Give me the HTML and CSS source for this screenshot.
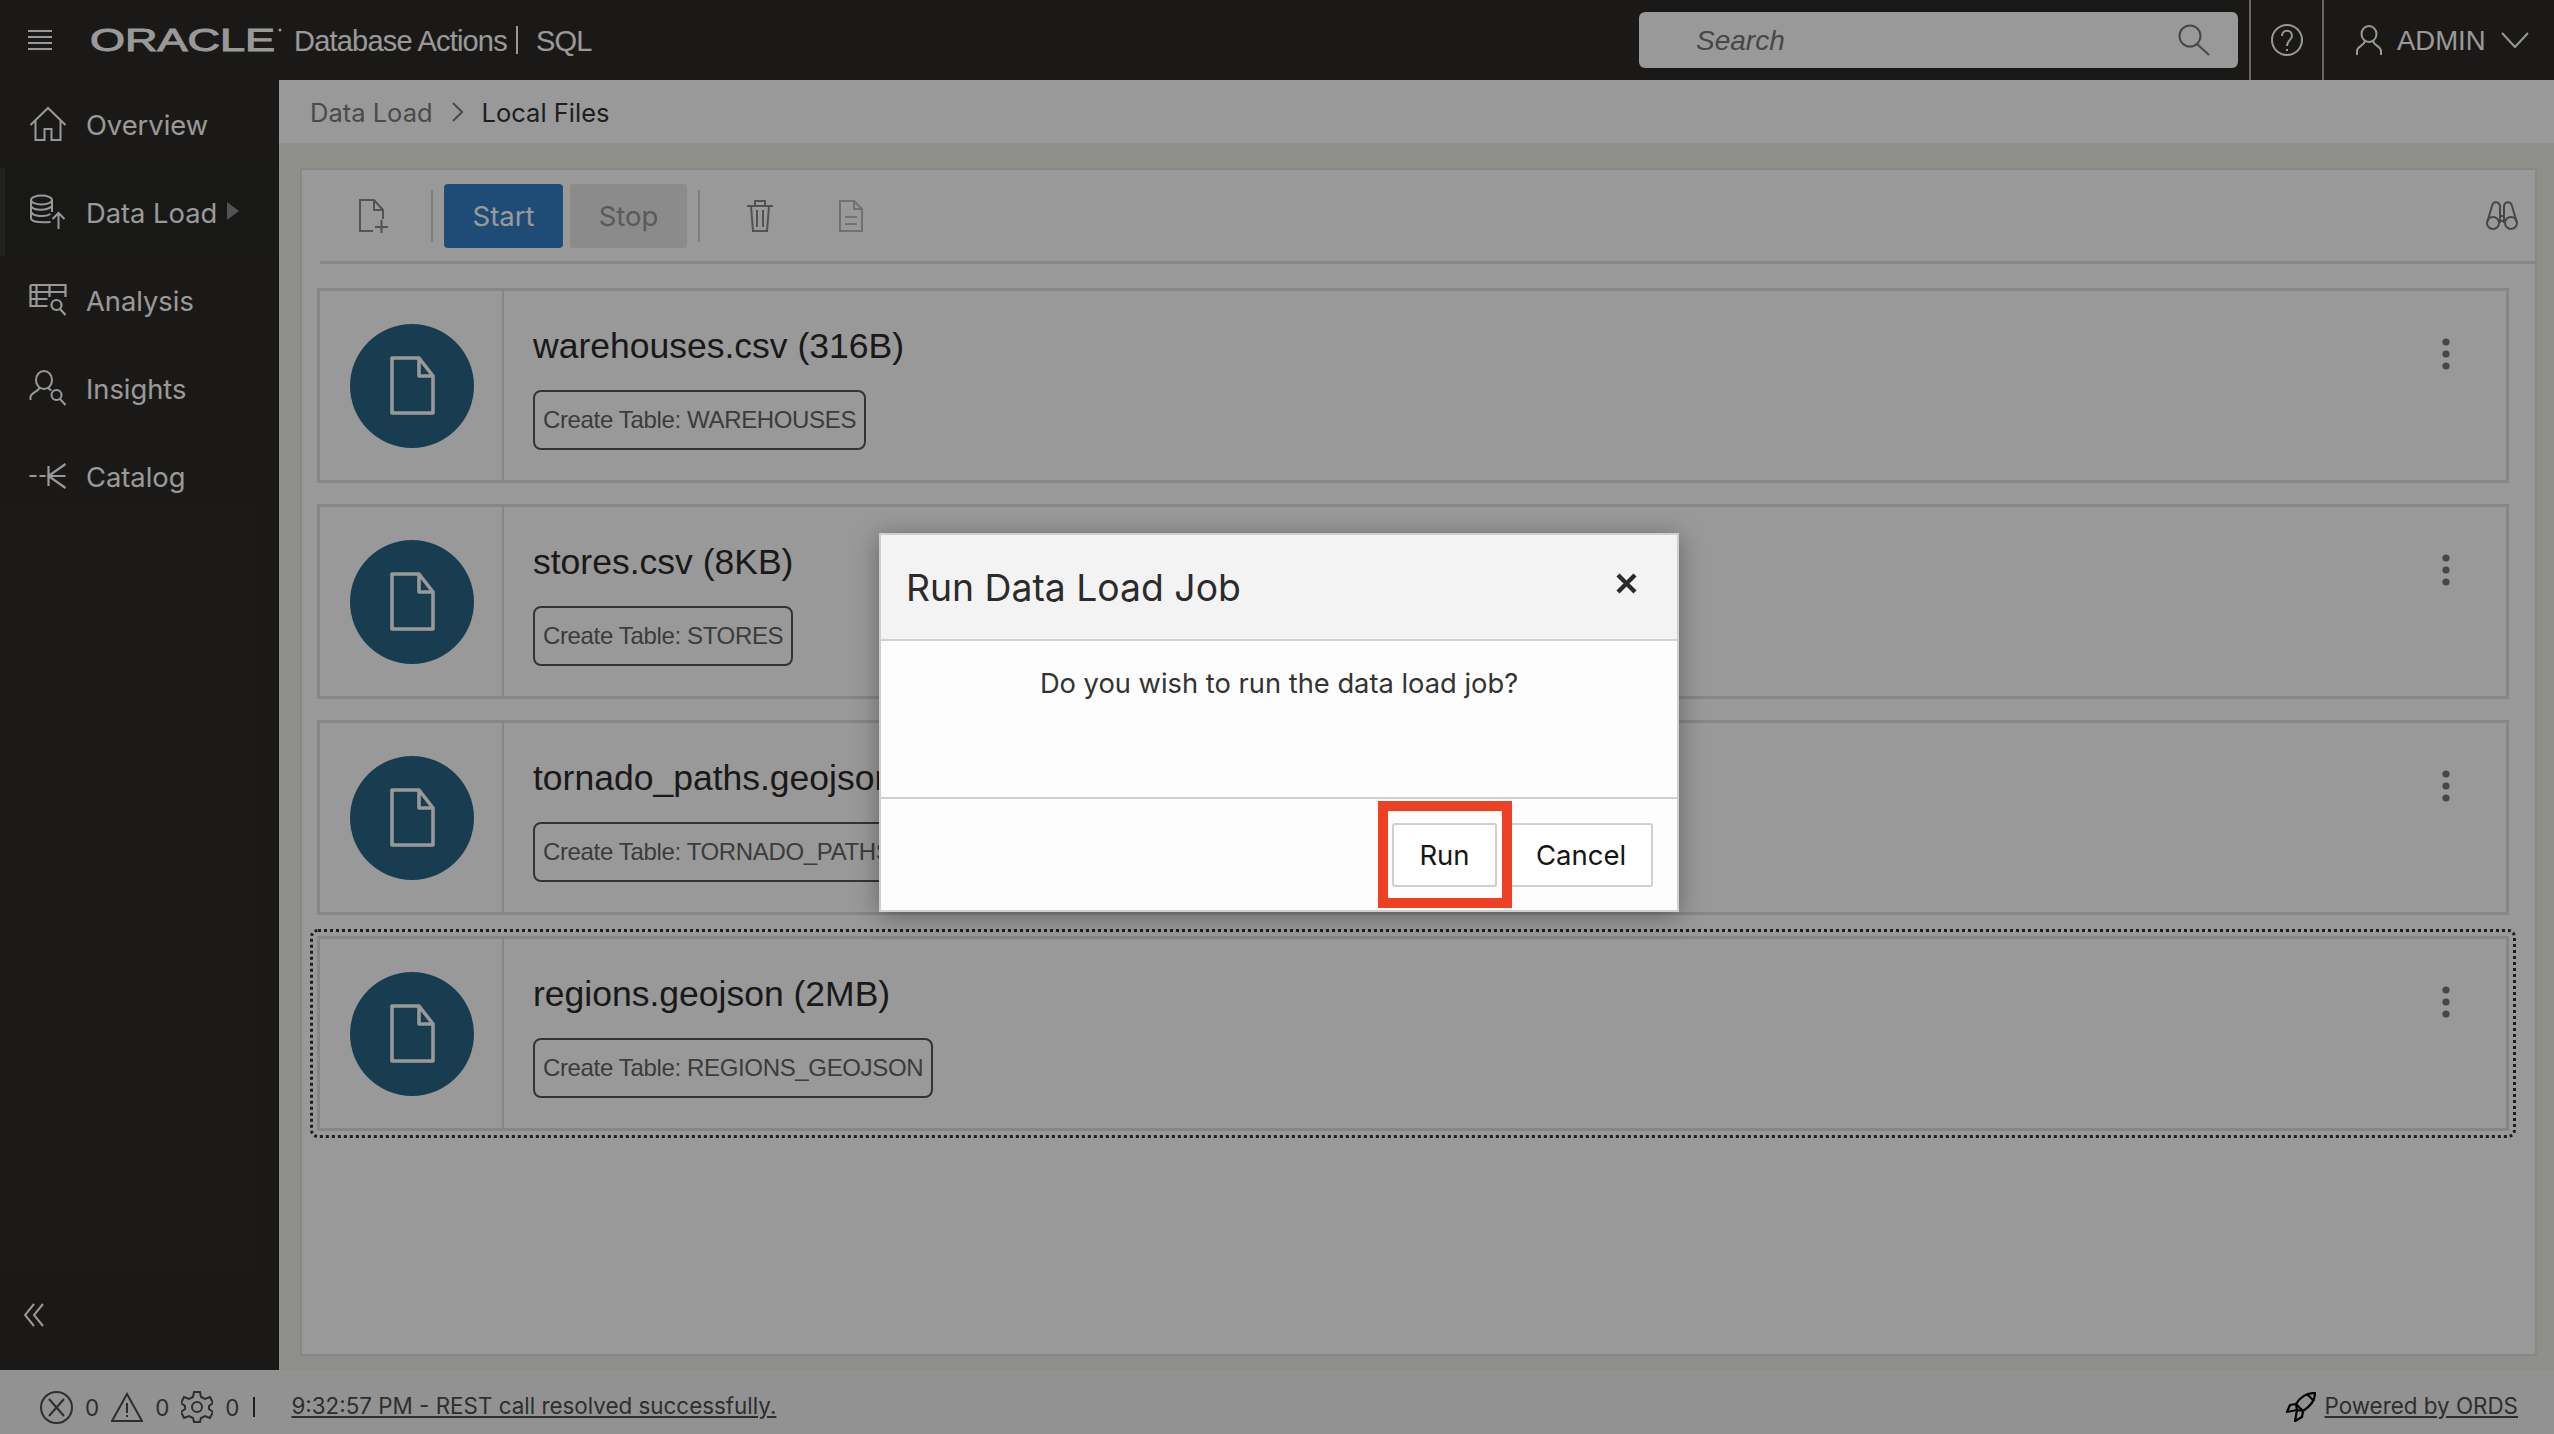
FILE: index.html
```html
<!DOCTYPE html>
<html lang="en">
<head>
    <meta charset="UTF-8">
    <title>Database Actions | SQL</title>
    <link rel="stylesheet" href="styles.css">
</head>
<body>

<svg class="sprites" width="0" height="0">
    <symbol id="file" viewBox="0 0 45 59">
        <path d="M2 2H29L43 20V57H2Z M29 2V20H43" fill="none" stroke="currentColor" stroke-width="3.6" stroke-linejoin="round"/>
    </symbol>
    <symbol id="kebab" viewBox="0 0 10 32">
        <circle cx="5" cy="4" r="3.6" fill="currentColor"/>
        <circle cx="5" cy="16" r="3.6" fill="currentColor"/>
        <circle cx="5" cy="28" r="3.6" fill="currentColor"/>
    </symbol>
</svg>

<!-- Top bar -->
<header class="topbar">
    <svg class="hamburger" width="24" height="22" viewBox="0 0 24 22">
        <path d="M0 2H24M0 8H24M0 14H24M0 20H24" stroke="currentColor" stroke-width="2"/>
    </svg>
    <svg class="logo" width="194" height="36" viewBox="0 0 194 36">
        <text x="0" y="29" textLength="185" lengthAdjust="spacingAndGlyphs">ORACLE</text>
        <circle cx="190" cy="8" r="1.5" fill="currentColor"/>
    </svg>
    <span class="app-title">Database Actions</span>
    <span class="app-divider"></span>
    <span class="app-title">SQL</span>

    <div class="search">
        <span class="search-text">Search</span>
        <svg width="32" height="32" viewBox="0 0 32 32" fill="none" stroke="currentColor" stroke-width="2">
            <circle cx="12" cy="12" r="10.5"/>
            <path d="M19 20L31 31"/>
        </svg>
    </div>
    <div class="help">
        <svg width="32" height="34" viewBox="0 0 32 34" fill="none" stroke="currentColor" stroke-width="2">
            <circle cx="16" cy="17" r="15"/>
            <path d="M11 13C11 6 21 6 21 13C21 17 16 17 16 23"/>
            <path d="M16 26V28"/>
        </svg>
    </div>
    <div class="user">
        <svg width="26" height="30" viewBox="0 0 26 30" fill="none" stroke="currentColor" stroke-width="2">
            <ellipse cx="13" cy="9" rx="7.5" ry="8"/>
            <path d="M1 30V26C1 21 8 21 9 16M25 30V26C25 21 18 21 17 16"/>
        </svg>
        <span class="user-name">ADMIN</span>
        <svg width="28" height="16" viewBox="0 0 28 16" fill="none" stroke="currentColor" stroke-width="2">
            <path d="M1 1L14 15L27 1"/>
        </svg>
    </div>
</header>

<div class="main">
    <!-- Side menu -->
    <nav class="sidebar">
        <a class="nav-item">
            <svg width="37" height="36" viewBox="0 0 37 36" fill="none" stroke="currentColor" stroke-width="2">
                <path d="M1 19L18.500 2L36 19M6 14V34H15V23H22V34H31V14"/>
            </svg>
            <span>Overview</span>
        </a>
        <a class="nav-item active">
            <svg width="37" height="36" viewBox="0 0 37 36" fill="none" stroke="currentColor" stroke-width="2">
                <ellipse cx="12" cy="6" rx="10.5" ry="4.5"/>
                <path d="M1.5 6V24C1.5 27 6 29 21 28M22.500 6V18M1.500 12C4 17 18 17 22.500 12M1.500 18C4 23 16 23 21 20"/>
                <path d="M29 35V19M23 25L29 19L35 25"/>
            </svg>
            <span>Data Load</span>
            <span class="nav-arrow"></span>
        </a>
        <a class="nav-item">
            <svg width="37" height="32" viewBox="0 0 37 32" fill="none" stroke="currentColor" stroke-width="2.200">
                <path d="M1 1H36V13M1 1V22H18M1 8H36M1 15H18M7 1V22M20 1V8M20 8V13"/>
                <circle cx="27" cy="21" r="5"/>
                <path d="M30.500 25L36 31"/>
            </svg>
            <span>Analysis</span>
        </a>
        <a class="nav-item">
            <svg width="37" height="36" viewBox="0 0 37 36" fill="none" stroke="currentColor" stroke-width="2">
                <ellipse cx="14.500" cy="10" rx="8" ry="9"/>
                <path d="M1 30V27C1 23 8 22 10 18M19 18C20 20 21 20 22 20"/>
                <circle cx="27" cy="25" r="5"/>
                <path d="M30.500 29L36 35"/>
            </svg>
            <span>Insights</span>
        </a>
        <a class="nav-item">
            <svg width="37" height="26" viewBox="0 0 37 26" fill="none" stroke="currentColor" stroke-width="2.200">
                <path d="M0 13H7M10 13H16M36 1L19 13L36 25M19 3V23M19 13H36"/>
            </svg>
            <span>Catalog</span>
        </a>
        <svg class="collapse" width="20" height="24" viewBox="0 0 20 24" fill="none" stroke="currentColor" stroke-width="2">
            <path d="M10 1L1 12L10 23M19 1L10 12L19 23"/>
        </svg>
    </nav>

    <div class="content">
        <div class="breadcrumb">
            <span>Data Load</span>
            <svg width="11" height="20" viewBox="0 0 11 20" fill="none" stroke="currentColor" stroke-width="2">
                <path d="M1 1L10 10L1 19"/>
            </svg>
            <span class="current">Local Files</span>
        </div>

        <div class="workspace">
            <div class="panel">
                <div class="toolbar">
                    <svg class="tool tool-add" width="30" height="34" viewBox="0 0 30 34" fill="none" stroke="currentColor" stroke-width="2">
                        <path d="M14 32H1V1H15L24 11V20M15 1V11H24M16 28H29M22.500 21V34"/>
                    </svg>
                    <span class="tool-sep"></span>
                    <button class="btn btn-start">Start</button>
                    <button class="btn btn-stop">Stop</button>
                    <span class="tool-sep"></span>
                    <svg class="tool tool-trash" width="28" height="32" viewBox="0 0 28 32" fill="none" stroke="currentColor" stroke-width="2">
                        <path d="M1 6H27M9 6V1H19V6M5 6L7 31H21L23 6M11 10V27M17 10V27"/>
                    </svg>
                    <svg class="tool tool-doc" width="24" height="32" viewBox="0 0 24 32" fill="none" stroke="currentColor" stroke-width="2">
                        <path d="M1 1H15L23 9V31H1ZM15 1V9H23M6 17H18M6 24H18"/>
                    </svg>
                    <svg class="tool tool-find" width="32" height="30" viewBox="0 0 32 30" fill="none" stroke="currentColor" stroke-width="2">
                        <circle cx="7" cy="22" r="6"/>
                        <circle cx="25" cy="22" r="6"/>
                        <path d="M1 22L6 5C7 0 13 0 14 5V22M31 22L26 5C25 0 19 0 18 5V22M14 15H18M14 20H18"/>
                    </svg>
                </div>

                <div class="cards">
                    <div class="card">
                        <div class="card-icon"><div class="circle"><svg width="45" height="59"><use href="#file"/></svg></div></div>
                        <div class="card-body">
                            <div class="card-title">warehouses.csv (316B)</div>
                            <span class="tag">Create Table: WAREHOUSES</span>
                        </div>
                        <svg class="kebab" width="10" height="32"><use href="#kebab"/></svg>
                    </div>
                    <div class="card">
                        <div class="card-icon"><div class="circle"><svg width="45" height="59"><use href="#file"/></svg></div></div>
                        <div class="card-body">
                            <div class="card-title">stores.csv (8KB)</div>
                            <span class="tag">Create Table: STORES</span>
                        </div>
                        <svg class="kebab" width="10" height="32"><use href="#kebab"/></svg>
                    </div>
                    <div class="card">
                        <div class="card-icon"><div class="circle"><svg width="45" height="59"><use href="#file"/></svg></div></div>
                        <div class="card-body">
                            <div class="card-title">tornado_paths.geojson (26MB)</div>
                            <span class="tag">Create Table: TORNADO_PATHS_GEOJSON</span>
                        </div>
                        <svg class="kebab" width="10" height="32"><use href="#kebab"/></svg>
                    </div>
                    <div class="card card-focus">
                        <div class="card-icon"><div class="circle"><svg width="45" height="59"><use href="#file"/></svg></div></div>
                        <div class="card-body">
                            <div class="card-title">regions.geojson (2MB)</div>
                            <span class="tag">Create Table: REGIONS_GEOJSON</span>
                        </div>
                        <svg class="kebab" width="10" height="32"><use href="#kebab"/></svg>
                    </div>
                </div>
            </div>
        </div>
    </div>
</div>

<!-- Status bar -->
<footer class="statusbar">
    <svg width="33" height="33" viewBox="0 0 33 33" fill="none" stroke="currentColor" stroke-width="2">
        <circle cx="16.500" cy="16.500" r="15.500"/>
        <path d="M9 8L24 25M24 8L9 25"/>
    </svg>
    <span class="count">0</span>
    <svg width="32" height="30" viewBox="0 0 32 30" fill="none" stroke="currentColor" stroke-width="2">
        <path d="M16 2L31 29H1Z M16 11V21M16 23V25"/>
    </svg>
    <span class="count">0</span>
    <svg width="32" height="32" viewBox="0 0 32 32" fill="none" stroke="currentColor" stroke-width="2">
        <circle cx="16" cy="16" r="5"/>
        <path d="M13 1H19L20 6L24 8L29 6L32 12L28 15V18L32 21L29 27L24 25L20 27L19 31H13L12 27L8 25L3 27L0 21L4 18V15L0 12L3 6L8 8L12 6Z"/>
    </svg>
    <span class="count">0</span>
    <span class="status-sep"></span>
    <a class="status-msg">9:32:57 PM - REST call resolved successfully.</a>
    <svg class="rocket" width="30" height="30" viewBox="0 0 30 30" fill="none" stroke="#000" stroke-width="2.200" stroke-linejoin="round">
        <path d="M29 1C21 1 15 4 10 12L17 19C25 14 29 8 29 1Z"/>
        <path d="M21 2L28 9"/>
        <path d="M10 12L4 13L1 20L11 18Z"/>
        <path d="M17 19L16 25L9 29L11 18Z"/>
    </svg>
    <a class="status-link">Powered by ORDS</a>
</footer>

<!-- Modal -->
<div class="overlay"></div>
<div class="dialog">
    <div class="dialog-head">
        <span class="dialog-title">Run Data Load Job</span>
        <svg class="dialog-close" width="21" height="21" viewBox="0 0 21 21" stroke="#2b2b2b" stroke-width="4.400">
            <path d="M2 2L19 19M19 2L2 19"/>
        </svg>
    </div>
    <div class="dialog-body">Do you wish to run the data load job?</div>
    <div class="dialog-foot">
        <button class="dialog-btn btn-run">Run</button>
        <button class="dialog-btn btn-cancel">Cancel</button>
    </div>
    <div class="callout"></div>
</div>

</body>
</html>
```

FILE: styles.css
```css
* { box-sizing: border-box; }
html, body { margin: 0; height: 100%; }
body { width: 2554px; height: 1434px; overflow: hidden; display: flex; flex-direction: column; font-family: Inter, "Liberation Sans", sans-serif; background: #fff; position: relative; }
svg { display: block; flex: none; }
.sprites { position: absolute; }

/* top bar */
.topbar { height: 80px; flex: none; display: flex; align-items: center; background: #2d2b28; color: #fff; padding-left: 28px; }
.hamburger { margin-right: 38px; }
.logo { margin-right: 10px; overflow: visible; font-family: "Liberation Sans", sans-serif; font-size: 32px; }
.logo text { fill: currentColor; stroke: currentColor; stroke-width: 1px; }
.app-title { font-family: "Liberation Sans", sans-serif; font-size: 29px; letter-spacing: -0.8px; padding-top: 2px; }
.app-divider { width: 2px; height: 28px; background: #fff; margin: 0 18px 0 9px; }
.search { width: 599px; height: 56px; margin-left: auto; background: #fff; border-radius: 6px; color: #777; display: flex; align-items: center; justify-content: space-between; padding: 0 28px 0 57px; }
.search-text { font-family: "Liberation Sans", sans-serif; font-style: italic; font-size: 28px; padding-top: 2px; }
.help { width: 75px; height: 80px; margin-left: 11px; border-left: 2px solid #aaa; border-right: 2px solid #aaa; display: flex; align-items: center; justify-content: center; }
.user { width: 230px; display: flex; align-items: center; padding-left: 32px; }
.user-name { font-family: "Liberation Sans", sans-serif; font-size: 27.5px; margin: 0 15px 0 15px; padding-top: 2px; }

/* layout */
.main { flex: 1; display: flex; min-height: 0; }
.sidebar { width: 279px; flex: none; background: #2d2b28; color: #fff; position: relative; }
.nav-item { height: 88px; display: flex; align-items: center; padding-left: 29px; font-size: 27.3px; }
.nav-item span { padding-top: 2px; }
.nav-item svg { width: 38px; margin-right: 19px; }
.nav-item.active { background: #282826; border-left: 5px solid #3a3a38; padding-left: 24px; }
.nav-item .nav-arrow { width: 0; height: 0; padding: 0; margin-left: 10px; margin-bottom: 2px; border-left: 12px solid #8a8a8a; border-top: 9px solid transparent; border-bottom: 9px solid transparent; }
.collapse { position: absolute; left: 24px; bottom: 43px; }
.content { flex: 1; display: flex; flex-direction: column; min-width: 0; }
.breadcrumb { height: 65px; flex: none; display: flex; align-items: center; gap: 19px; padding-left: 31px; font-size: 25.5px; color: #7c7c7c; background: #fff; border-bottom: 2px solid #eee; }
.breadcrumb span { padding-top: 2px; }
.breadcrumb .current { color: #333; }
.workspace { flex: 1; min-height: 0; background: #eeeee8; padding: 23px 17px 14px 21px; }
.panel { height: 100%; background: #fff; border: 2px solid #e2e2e2; }

/* toolbar */
.toolbar { height: 94px; margin-left: 18px; border-bottom: 3px solid #e2e2e2; display: flex; align-items: center; color: #8a8a8a; }
.tool-add { margin: 0 42px 0 39px; }
.tool-sep { width: 2px; height: 52px; background: #d4d4d4; }
.btn { height: 64px; border: 0; border-radius: 4px; font: 27.5px Inter, sans-serif; }
.btn-start { width: 119px; margin-left: 11px; background: #347dc6; color: #fff; }
.btn-stop { width: 117px; margin: 0 11px 0 7px; background: #e8e8e8; color: #969696; }
.tool-trash { margin-left: 46px; }
.tool-doc { margin-left: 65px; color: #bdbdbd; }
.tool-find { margin-left: auto; margin-right: 17px; color: #777; }

/* file cards */
.cards { display: flex; flex-direction: column; gap: 21px; padding: 24px 26px 0 15px; }
.card { height: 195px; display: flex; background: #fff; border: 3px solid #e0e0e0; position: relative; }
.card-focus { outline: 3px dotted #333; outline-offset: 4px; border-radius: 1px; }
.card-icon { width: 184px; flex: none; padding-left: 2px; border-right: 2px solid #e0e0e0; display: flex; align-items: center; justify-content: center; }
.circle { width: 124px; height: 124px; border-radius: 50%; background: #286485; color: #fff; display: flex; align-items: center; justify-content: center; }
.card-body { flex: 1; padding: 33px 0 0 29px; font-family: "Liberation Sans", sans-serif; }
.card-title { font-size: 35.500px; line-height: 44px; color: #2b2b2b; margin-bottom: 22px; }
.tag { display: inline-block; height: 60px; line-height: 56px; padding: 0 8px; font-size: 24px; letter-spacing: -0.35px; color: #646464; border: 2px solid #555; border-radius: 8px; }
.kebab { position: absolute; right: 55px; top: 47px; color: #777; }

/* status bar */
.statusbar { height: 64px; flex: none; display: flex; align-items: center; padding: 10px 36px 0 40px; background: #f3f3f3; color: #4d4d4d; font-size: 22.4px; }
.count { margin: 0 12px 0 12px; }
.status-sep { width: 2px; height: 20px; background: #333; margin-left: 2px; margin-right: 36px; }
.status-msg, .status-link { text-decoration: underline; color: #4d4d4d; margin-bottom: 3px; }
.rocket { margin-left: auto; margin-right: 8px; }

/* modal */
.overlay { position: absolute; inset: 0; background: rgba(0, 0, 0, 0.4); }
.dialog { position: absolute; left: 879px; top: 533px; width: 800px; height: 379px; background: #fdfdfd; border: 2px solid #cfcfcf; box-shadow: 0 4px 24px rgba(0, 0, 0, 0.35); display: flex; flex-direction: column; }
.dialog-head { height: 106px; flex: none; background: #f3f3f3; border-bottom: 2px solid #d0d0d0; display: flex; align-items: center; justify-content: space-between; padding: 0 40px 0 25px; }
.dialog-title { font-size: 37.3px; color: #2b2b2b; }
.dialog-close { margin-bottom: 8px; }
.dialog-body { height: 158px; flex: none; padding-top: 26px; text-align: center; font-size: 27.3px; color: #333; border-bottom: 2px solid #d0d0d0; }
.dialog-foot { flex: 1; display: flex; align-items: center; justify-content: flex-end; padding: 0 24px 0 0; }
.dialog-btn { height: 64px; background: #fff; border: 2px solid #d0d0d0; border-radius: 3px; font: 27.5px Inter, sans-serif; color: #161513; }
.btn-run { width: 105px; }
.btn-cancel { width: 144px; margin-left: 12px; }
.callout { position: absolute; left: 497px; top: 266px; width: 134px; height: 107px; border: 10px solid #ee4025; }
```
